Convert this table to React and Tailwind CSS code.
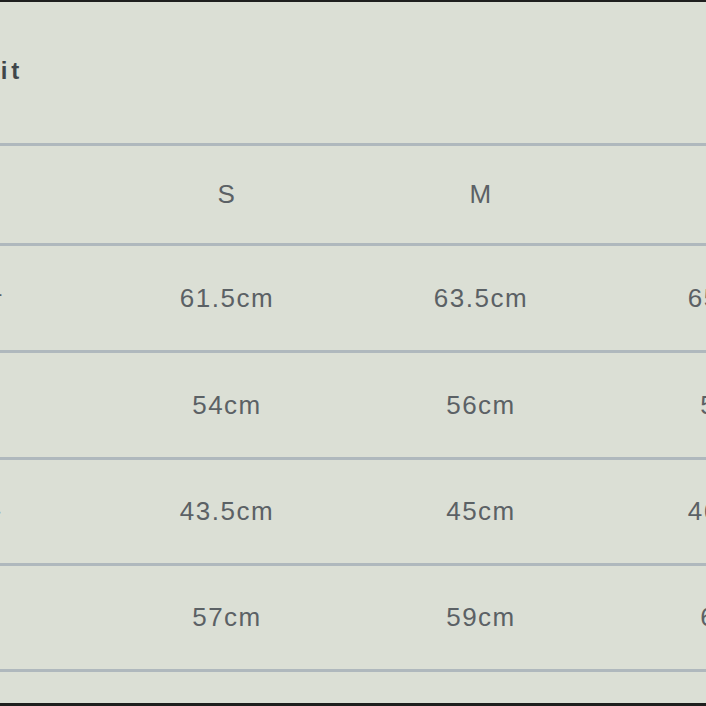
import React from "react";

const sizes = ["S", "M", "L"];

const rows = [
  { label: "총장", values: ["61.5cm", "63.5cm", "65.5cm"], h: "h-[104px]" },
  { label: "어깨", values: ["54cm", "56cm", "58cm"], h: "h-[104px]" },
  { label: "가슴", values: ["43.5cm", "45cm", "46.5cm"], h: "h-[103px]" },
  { label: "소매", values: ["57cm", "59cm", "61cm"], h: "h-[103px]" },
];

const Line = () => <div className="h-[3px] w-full shrink-0 bg-[#afb8bd]" />;

const App = () => {
  return (
    <div
      className="w-[706px] h-[706px] overflow-hidden bg-[#dbdfd5] flex flex-col border-t-2 border-b-[3px] border-[#1e1f1e]"
      style={{ fontFamily: "'Liberation Sans', Arial, sans-serif" }}
    >
      {/* title */}
      <div className="h-[141px] shrink-0 flex items-center">
        <h2 className="-ml-[18px] -mt-[4px] text-[24px] font-bold tracking-[4px] text-[#40464a]">
          Fit
        </h2>
      </div>
      <Line />

      {/* sizes header */}
      <div className="h-[97px] shrink-0 flex items-center text-[26px] tracking-[1.5px] text-[#5b6165]">
        <div className="w-[100px] shrink-0" />
        {sizes.map((s) => (
          <div key={s} className="w-[254px] shrink-0 text-center">
            {s}
          </div>
        ))}
      </div>
      <Line />

      {rows.map((row) => (
        <React.Fragment key={row.label}>
          <div className={`${row.h} shrink-0 flex items-center text-[26px] tracking-[1.5px] text-[#5b6165]`}>
            <div className="w-[100px] shrink-0 flex justify-end pr-[97px] whitespace-nowrap">
              {row.label}
            </div>
            {row.values.map((v, i) => (
              <div key={i} className="w-[254px] shrink-0 text-center">
                {v}
              </div>
            ))}
          </div>
          <Line />
        </React.Fragment>
      ))}
      <div className="flex-1" />
    </div>
  );
};

export default App;
